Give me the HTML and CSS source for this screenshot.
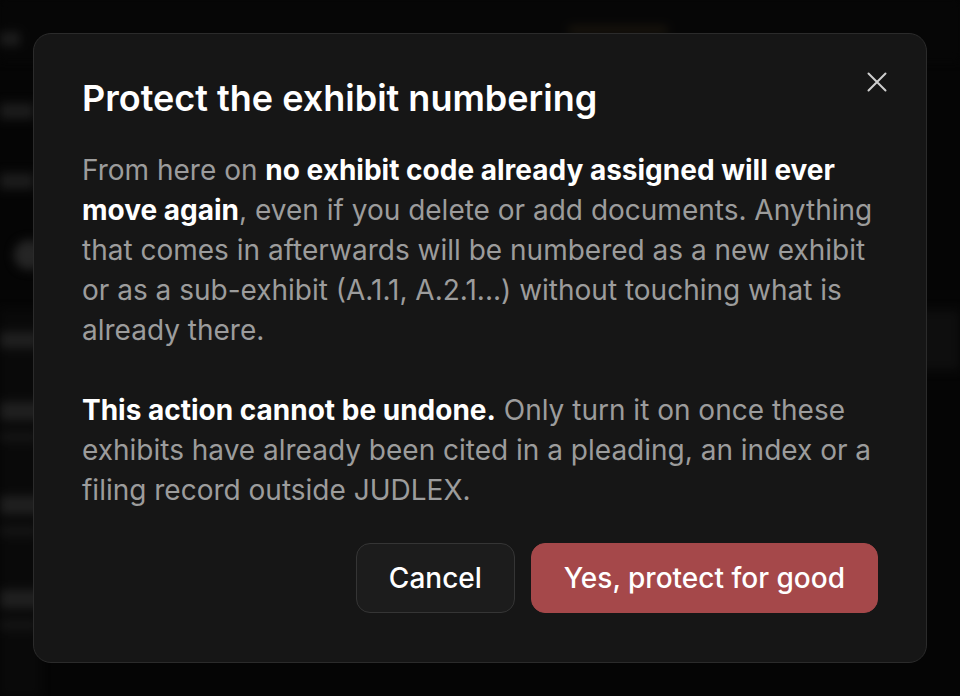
FILE: index.html
```html
<!DOCTYPE html>
<html lang="en">
<head>
<meta charset="utf-8">
<title>Protect the exhibit numbering</title>
<link rel="stylesheet" href="styles.css">
</head>
<body>
<div class="page" aria-hidden="true">
  <div class="topbar">
    <span class="tb-item tb-short"></span>
    <span class="tb-accent"></span>
  </div>
  <div class="main">
    <div class="list">
      <span class="blk b1"></span>
      <span class="blk b2"></span>
      <span class="dot"></span>
      <div class="lower">
        <span class="blk b3"></span>
        <div class="pair"><span class="blk b4"></span><span class="blk b5"></span></div>
        <div class="pair"><span class="blk b4"></span><span class="blk b5"></span></div>
        <div class="pair"><span class="blk b4"></span><span class="blk b5"></span></div>
      </div>
    </div>
    <div class="side">
      <div class="band"></div>
    </div>
  </div>
</div>

<div class="overlay">
  <div class="dialog" role="dialog" aria-labelledby="dlg-title">
    <button class="close" aria-label="Close">
      <svg viewBox="0 0 20 20" width="20" height="20"><path d="M1.5 1.5 L18.5 18.5 M18.5 1.5 L1.5 18.5" stroke="currentColor" stroke-width="2" stroke-linecap="round" fill="none"/></svg>
    </button>
    <h2 id="dlg-title" class="title">Protect the exhibit numbering</h2>
    <p class="text">From here on <strong>no exhibit code already assigned will ever move again</strong>, even if you delete or add documents. Anything that comes in afterwards will be numbered as a new exhibit or as a sub-exhibit (A.1.1, A.2.1...) without touching what is already there.</p>
    <p class="text"><strong>This action cannot be undone.</strong> Only turn it on once these exhibits have already been cited in a pleading, an index or a filing record outside JUDLEX.</p>
    <div class="actions">
      <button class="btn btn-secondary">Cancel</button>
      <button class="btn btn-danger">Yes, protect for good</button>
    </div>
  </div>
</div>
</body>
</html>
```

FILE: styles.css
```css
* { box-sizing: border-box; }
html, body { margin: 0; padding: 0; }
body {
  width: 960px;
  height: 696px;
  overflow: hidden;
  background: #0a0a0a;
  font-family: Inter, "Noto Sans", "Liberation Sans", sans-serif;
  -webkit-font-smoothing: antialiased;
}

/* blurred page behind */
.page {
  height: 696px;
  display: flex;
  flex-direction: column;
  filter: blur(5px);
}
.topbar {
  height: 60px;
  display: flex;
  align-items: flex-start;
  gap: 548px;
  padding-top: 32px;
  background: #0c0c0c;
}
.tb-item { display: block; height: 14px; background: #333; }
.tb-short { width: 20px; }
.tb-accent { display: block; width: 100px; height: 8px; background: #2e2618; border-radius: 6px; margin-top: -6px; }
.main { flex: 1; display: flex; justify-content: space-between; }
.list {
  width: 40px;
  display: flex;
  flex-direction: column;
  padding-top: 43px;
}
.blk { display: block; height: 16px; background: #333; }
.b1 { width: 34px; }
.b2 { width: 34px; margin-top: 54px; }
.dot { display: block; width: 30px; height: 30px; border-radius: 50%; background: #444; margin: 51px 0 0 14px; }
.lower {
  display: flex;
  flex-direction: column;
  gap: 60px;
  background: #121212;
  margin-top: 40px;
  padding-top: 22px;
  flex: 1;
}
.b3 { width: 40px; background: #3a3a3a; }
.pair { display: flex; flex-direction: column; gap: 12px; margin-top: -6px; }
.b4 { width: 44px; height: 18px; background: #3a3a3a; }
.b5 { width: 38px; height: 10px; background: #262626; }
.side { width: 60px; padding-top: 250px; }
.band { height: 60px; background: #1a1a1a; }

/* modal */
.overlay {
  position: fixed;
  inset: 0;
  display: flex;
  align-items: center;
  justify-content: center;
  background: rgba(0, 0, 0, 0.45);
}
.dialog {
  position: relative;
  width: 894px;
  height: 630px;
  background: #161616;
  border: 1px solid #2b2b2b;
  border-radius: 18px;
  padding: 44px 48px 49px 48px;
  display: flex;
  flex-direction: column;
}
.close {
  position: absolute;
  top: 32px;
  right: 33px;
  width: 32px;
  height: 32px;
  padding: 0;
  border: 0;
  background: transparent;
  color: #cfcfcf;
  display: flex;
  align-items: center;
  justify-content: center;
}
.title {
  margin: 0 0 32px;
  font-size: 36px;
  line-height: 40px;
  font-weight: 600;
  color: #ffffff;
}
.text {
  margin: 0 0 40px;
  font-size: 28px;
  line-height: 40px;
  color: #9c9c9c;
}
.text strong { color: #ffffff; font-weight: 700; }
.text:last-of-type { margin-bottom: 0; }
.actions {
  margin-top: auto;
  display: flex;
  justify-content: flex-end;
  gap: 16px;
}
.btn {
  height: 70px;
  padding: 0 32px;
  border-radius: 14px;
  font-family: inherit;
  font-size: 28px;
  font-weight: 500;
  color: #ffffff;
}
.btn-secondary {
  background: #1c1c1c;
  border: 1px solid #353535;
}
.btn-danger {
  background: #a5484a;
  border: 1px solid #a5484a;
}
```
